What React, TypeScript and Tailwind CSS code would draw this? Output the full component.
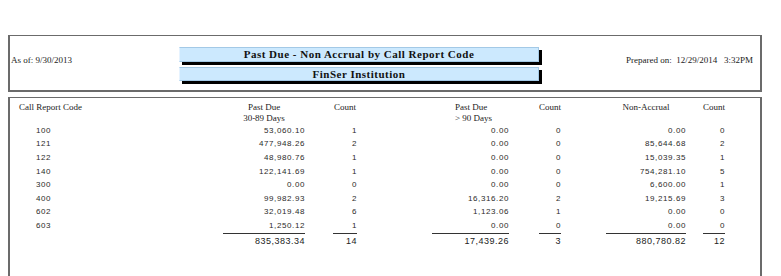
import React from "react";

const rows: [string, string, string, string, string, string, string][] = [
  ["100", "53,060.10", "1", "0.00", "0", "0.00", "0"],
  ["121", "477,948.26", "2", "0.00", "0", "85,644.68", "2"],
  ["122", "48,980.76", "1", "0.00", "0", "15,039.35", "1"],
  ["140", "122,141.69", "1", "0.00", "0", "754,281.10", "5"],
  ["300", "0.00", "0", "0.00", "0", "6,600.00", "1"],
  ["400", "99,982.93", "2", "16,316.20", "2", "19,215.69", "3"],
  ["602", "32,019.48", "6", "1,123.06", "1", "0.00", "0"],
  ["603", "1,250.12", "1", "0.00", "0", "0.00", "0"],
];

const serif = { fontFamily: '"Liberation Serif", "Times New Roman", serif' };
const sans = { fontFamily: '"Liberation Sans", Arial, sans-serif' };

function DataRow({ r }: { r: (typeof rows)[number] }) {
  return (
    <div className="flex h-[13.6px] items-center text-[8px] tracking-[0.6px] text-[#2a2a2a] leading-none" style={sans}>
      <div className="w-[213px] pl-[26px]">{r[0]}</div>
      <div className="w-[82px] text-right">{r[1]}</div>
      <div className="ml-[28px] w-[24px] text-right">{r[2]}</div>
      <div className="ml-[75px] w-[77px] text-right">{r[3]}</div>
      <div className="ml-[30px] w-[22px] text-right">{r[4]}</div>
      <div className="ml-[45px] w-[80px] text-right">{r[5]}</div>
      <div className="ml-[17px] w-[22px] text-right">{r[6]}</div>
    </div>
  );
}

export default function App() {
  return (
    <div className="w-[781px] h-[276px] overflow-hidden bg-white">
      <div className="pt-[35px] pl-[8px]">
        {/* Header box */}
        <div className="flex w-[754px] h-[57px] border-t border-l-2 border-r-2 border-b-2 border-[#6b6b6b]">
          <div className="w-[169px] flex items-center pl-[1px] pb-[4px] text-[9px] text-[#222]" style={serif}>
            As of: 9/30/2013
          </div>
          <div className="w-[360px] flex flex-col pt-[11px]">
            <div
              className="h-[15px] bg-[#cce9fe] border border-[#a3c9e6] border-l-[#e6f3ff] shadow-[3px_3px_0_#000] flex items-center justify-center text-[11px] font-bold tracking-[0.5px] text-[#111]"
              style={serif}
            >
              Past Due - Non Accrual by Call Report Code
            </div>
            <div
              className="mt-[5px] h-[14px] bg-[#cce9fe] border border-[#a3c9e6] border-l-[#e6f3ff] shadow-[3px_3px_0_#000] flex items-center justify-center text-[11px] font-bold tracking-[0.5px] text-[#111]"
              style={serif}
            >
              FinSer Institution
            </div>
          </div>
          <div className="flex items-center pl-[87px] pb-[4px] text-[9px] text-[#222] whitespace-pre" style={serif}>
            {"Prepared on:  12/29/2014   3:32PM"}
          </div>
        </div>

        {/* Table box */}
        <div className="mt-[5px] w-[754px] h-[200px] border-t border-l-2 border-r-2 border-[#6b6b6b] pt-[4px]">
          <div className="flex text-[9px] leading-[11px] text-[#222]" style={serif}>
            <div className="w-[213px] pl-[9px]">Call Report Code</div>
            <div className="w-[82px] text-center">
              <div>Past Due</div>
              <div>30-89 Days</div>
            </div>
            <div className="ml-[28px] w-[24px] flex justify-center">Count</div>
            <div className="ml-[75px] w-[77px] pl-[23px] whitespace-nowrap">
              <div>Past Due</div>
              <div>&gt; 90 Days</div>
            </div>
            <div className="ml-[30px] w-[22px] flex justify-center">Count</div>
            <div className="ml-[45px] w-[80px] flex justify-center whitespace-nowrap">Non-Accrual</div>
            <div className="ml-[17px] w-[22px] flex justify-center">Count</div>
          </div>
          <div>
            {rows.map((r) => (
              <DataRow key={r[0]} r={r} />
            ))}
          </div>
          <div className="flex text-[9px] tracking-[0.5px] leading-[14px] text-[#222]" style={sans}>
            <div className="w-[213px]"></div>
            <div className="w-[82px] text-right border-t border-[#333]">835,383.34</div>
            <div className="ml-[28px] w-[24px] text-right border-t border-[#333]">14</div>
            <div className="ml-[75px] w-[77px] text-right border-t border-[#333]">17,439.26</div>
            <div className="ml-[30px] w-[22px] text-right border-t border-[#333]">3</div>
            <div className="ml-[45px] w-[80px] text-right border-t border-[#333]">880,780.82</div>
            <div className="ml-[17px] w-[22px] text-right border-t border-[#333]">12</div>
          </div>
        </div>
      </div>
    </div>
  );
}
